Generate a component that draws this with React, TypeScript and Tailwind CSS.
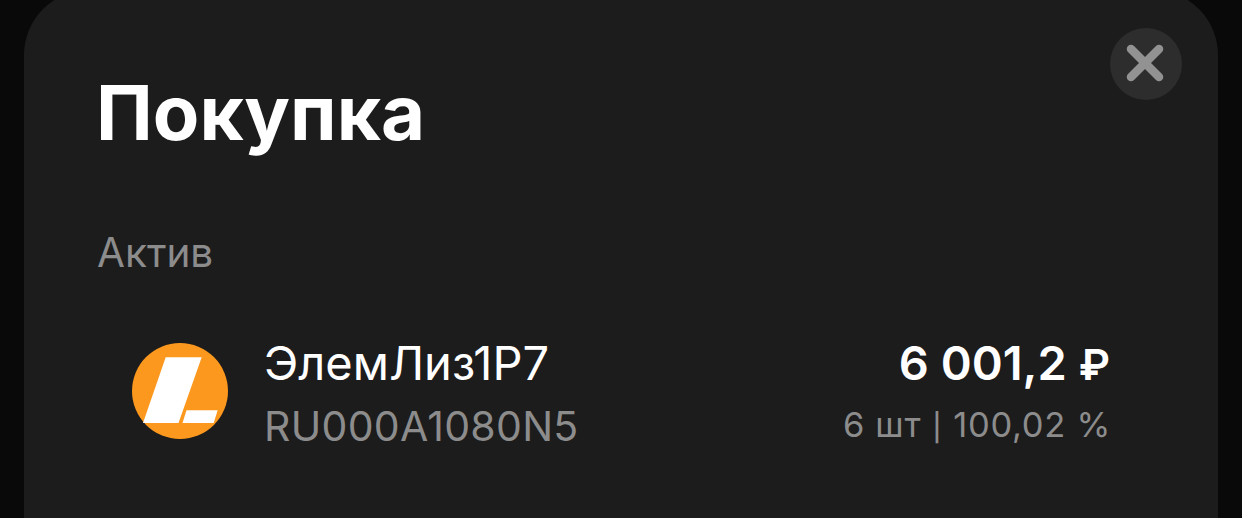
import React from 'react';

interface Asset {
  name: string;
  isin: string;
  total: string;
  quantity: string;
  price: string;
}

const asset: Asset = {
  name: 'ЭлемЛиз1Р7',
  isin: 'RU000A1080N5',
  total: '6 001,2',
  quantity: '6 шт',
  price: '100,02 %',
};

function CloseButton() {
  return (
    <button
      aria-label="Закрыть"
      className="mt-[38px] size-[72px] shrink-0 rounded-full bg-[#2d2d2d]"
    >
      <svg viewBox="0 0 72 72" className="size-full" fill="none">
        <path d="M21 21L49 49M49 21L21 49" stroke="#929292" strokeWidth="8.5" strokeLinecap="round" />
      </svg>
    </button>
  );
}

function AssetLogo() {
  return (
    <svg viewBox="0 0 96 96" className="mt-[10px] size-24 shrink-0">
      <circle cx="48" cy="48" r="48" fill="#fc981d" />
      <path d="M33.7 14.3H69.7L46.5 80H11Z" fill="#fff" />
      <path d="M54.5 67.3H85.7L81.7 80H50.5Z" fill="#fff" />
    </svg>
  );
}

function AssetRow({ name, isin, total, quantity, price }: Asset) {
  return (
    <div className="mt-[56px] flex items-start pr-[72px] pl-[34px]">
      <AssetLogo />
      <div className="ml-[36px] flex flex-col gap-[9px] whitespace-nowrap">
        <span className="text-[47px] leading-[60px] text-white">{name}</span>
        <span className="text-[41px] leading-[48px] tracking-[0.3px] text-[#8c8c8c]">{isin}</span>
      </div>
      <div className="ml-auto flex flex-col items-end gap-[7px] whitespace-nowrap">
        <span className="text-[47px] leading-[60px] font-semibold text-white">
          {total} <span className="text-[43px]">₽</span>
        </span>
        <span className="-mr-px flex items-baseline text-[34.5px] leading-[48px] tracking-[0.7px] text-[#8c8c8c]">
          {quantity}
          <span className="mx-[11px] text-[27px] font-medium">|</span>
          {price}
        </span>
      </div>
    </div>
  );
}

export default function App() {
  return (
    <div className="flex h-[518px] w-full overflow-hidden bg-[#090909] px-6 font-['Inter',sans-serif]">
      <div className="-mt-[10px] h-[600px] w-full shrink-0 rounded-t-[65px] bg-[#1c1c1c] pr-9 pl-[74px]">
        <div className="flex items-start justify-between">
          <h1 className="mt-[76px] -ml-[2px] text-[76px] leading-[92px] font-bold text-white">Покупка</h1>
          <CloseButton />
        </div>
        <p className="mt-[71px] -ml-px text-[40.5px] leading-[48px] text-[#8c8c8c]">Актив</p>
        <AssetRow {...asset} />
      </div>
    </div>
  );
}
